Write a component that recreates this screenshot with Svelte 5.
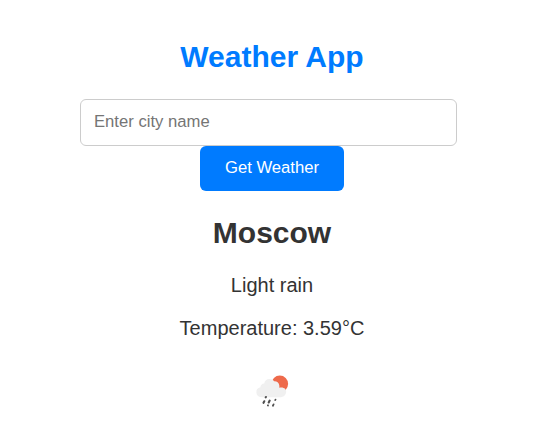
<script>
  let city = $state('');
  const weather = {
    city: 'Moscow',
    description: 'Light rain',
    temperature: 3.59
  };
</script>

<main class="app">
  <h1>Weather App</h1>
  <form onsubmit={(event) => event.preventDefault()}>
    <input type="text" placeholder="Enter city name" bind:value={city} />
    <button type="submit">Get Weather</button>
  </form>
  <section class="result">
    <h2>{weather.city}</h2>
    <p>{weather.description}</p>
    <p>Temperature: {weather.temperature}°C</p>
    <svg class="icon" width="36" height="36" viewBox="0 0 36 36" role="img" aria-label={weather.description}>
      <circle cx="25.8" cy="10.9" r="8.3" fill="#ee6a4b" />
      <path
        d="M7.2 24.2a5 5 0 0 1-.8-9.9A4.2 4.2 0 0 1 10.2 10.4a5.5 5.5 0 0 1 5.2-4.4c2.2 0 3.8.8 4.7 2.2a4.7 4.7 0 0 1 5.2 4.4c.1 1 .1 1.5 0 2.1 2.2-.7 4.6-.2 5.9 1.2 2.6 3-.1 7.6-4.1 8.3H7.2z"
        fill="#f0f0f0"
      />
      <g stroke="#505050" stroke-width="2.1" stroke-linecap="round">
        <path d="M11.9 24l-.2.4M10.3 28.3l-.8 1.5M15.7 27.6l-1 1.9" />
        <path d="M21.5 26.6l-.3.5M19.6 31.4l-.7 1.3M14 32.3l-.1.2" stroke-width="1.8" />
      </g>
    </svg>
  </section>
</main>

<style>
  :global(body) {
    margin: 0;
    background: #fff;
  }

  .app {
    box-sizing: border-box;
    width: 544px;
    height: 448px;
    padding: 40px 80px 0;
    color: #333;
    font-family: 'Liberation Sans', Arial, sans-serif;
    text-align: center;
  }

  h1,
  h2 {
    margin: 0;
    font-size: 30px;
    line-height: 34px;
  }

  h1 {
    color: #007bff;
  }

  form {
    display: flex;
    flex-direction: column;
    align-items: center;
    margin-top: 25px;
  }

  input {
    box-sizing: border-box;
    align-self: flex-start;
    width: 377px;
    height: 47px;
    padding: 0 13px 2px;
    border: 1px solid #ccc;
    border-radius: 6px;
    background: #fff;
    font: 16.67px 'Liberation Sans', Arial, sans-serif;
  }

  input::placeholder {
    color: #757575;
    opacity: 1;
  }

  button {
    width: 144px;
    height: 45px;
    padding: 0 0 2px;
    border: 0;
    border-radius: 6px;
    background: #007bff;
    color: #fff;
    font: 16.67px 'Liberation Sans', Arial, sans-serif;
  }

  .result {
    margin-top: 25px;
  }

  p {
    margin: 20px 0 0;
    font-size: 20px;
    line-height: 23px;
  }

  h2 + p {
    margin-top: 24px;
  }

  .icon {
    display: block;
    margin: 33px auto 0;
  }
</style>
